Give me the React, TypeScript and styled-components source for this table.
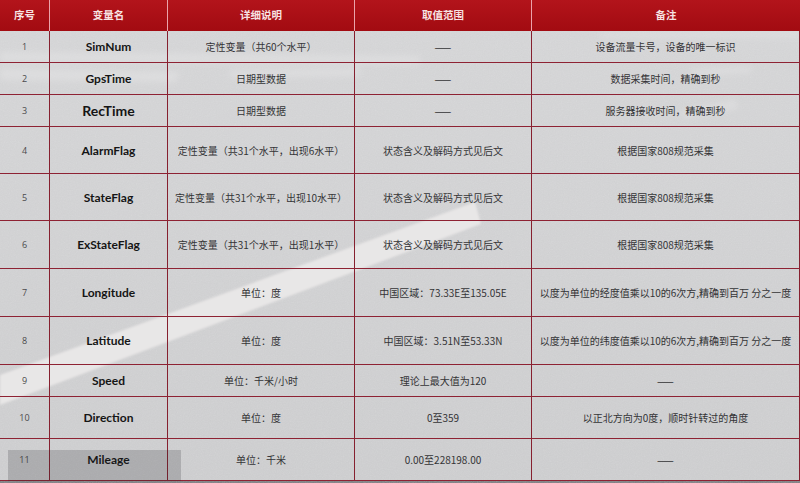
import React from 'react';
import styled, {createGlobalStyle} from "styled-components";

type Entry = {
    no: string;
    name: string;
    desc: string;
    range: string;
    note: string;
    height: number;
    big?: boolean;
};

const heads = ['序号', '变量名', '详细说明', '取值范围', '备注'];

const entries: Entry[] = [
    {no: '1', name: 'SimNum', desc: '定性变量（共60个水平）', range: '——', note: '设备流量卡号，设备的唯一标识', height: 32},
    {no: '2', name: 'GpsTime', desc: '日期型数据', range: '——', note: '数据采集时间，精确到秒', height: 32},
    {no: '3', name: 'RecTime', desc: '日期型数据', range: '——', note: '服务器接收时间，精确到秒', height: 32, big: true},
    {no: '4', name: 'AlarmFlag', desc: '定性变量（共31个水平，出现6水平）', range: '状态含义及解码方式见后文', note: '根据国家808规范采集', height: 47},
    {no: '5', name: 'StateFlag', desc: '定性变量（共31个水平，出现10水平）', range: '状态含义及解码方式见后文', note: '根据国家808规范采集', height: 47},
    {no: '6', name: 'ExStateFlag', desc: '定性变量（共31个水平，出现1水平）', range: '状态含义及解码方式见后文', note: '根据国家808规范采集', height: 48},
    {no: '7', name: 'Longitude', desc: '单位：度', range: '中国区域：73.33E至135.05E', note: '以度为单位的经度值乘以10的6次方,精确到百万 分之一度', height: 48},
    {no: '8', name: 'Latitude', desc: '单位：度', range: '中国区域：3.51N至53.33N', note: '以度为单位的纬度值乘以10的6次方,精确到百万 分之一度', height: 48},
    {no: '9', name: 'Speed', desc: '单位：千米/小时', range: '理论上最大值为120', note: '——', height: 32},
    {no: '10', name: 'Direction', desc: '单位：度', range: '0至359', note: '以正北方向为0度，顺时针转过的角度', height: 42},
    {no: '11', name: 'Mileage', desc: '单位：千米', range: '0.00至228198.00', note: '——', height: 42},
];

const Road = () => (
    <Backdrop viewBox="0 0 800 483" preserveAspectRatio="none">
        <defs>
            <linearGradient id="asphalt" x1="0" y1="0" x2="0" y2="1">
                <stop offset="0" stopColor="#95969a"/>
                <stop offset="1" stopColor="#7f8084"/>
            </linearGradient>
            <filter id="grain">
                <feTurbulence type="fractalNoise" baseFrequency="0.85" numOctaves="2" stitchTiles="stitch"/>
                <feColorMatrix type="saturate" values="0"/>
            </filter>
            <filter id="soft">
                <feGaussianBlur stdDeviation="3"/>
            </filter>
            <filter id="edge">
                <feGaussianBlur stdDeviation="0.8"/>
            </filter>
        </defs>
        <rect width="800" height="483" fill="url(#asphalt)"/>
        <rect width="800" height="483" filter="url(#grain)" opacity="0.22"/>
        <g filter="url(#soft)" fill="#bdbdc0" opacity="0.5">
            <polygon points="0,52 420,56 420,64 0,62"/>
            <polygon points="0,68 180,72 175,82 0,80"/>
            <polygon points="230,70 360,68 360,76 230,78"/>
            <polygon points="600,33 800,31 800,38 600,38"/>
            <polygon points="690,70 750,66 752,72 692,76"/>
            <polygon points="680,112 735,100 738,108 684,118"/>
        </g>
        <polygon points="0,375 475,202 481,224 0,405" fill="#c6c2c2" filter="url(#edge)"/>
    </Backdrop>
);

export default function App() {
    return (
        <>
            <GlobalStyle/>
            <Stage>
                <Road/>
                <Sheet>
                    <HeadRow>
                        {heads.map(h => <HeadCell key={h}>{h}</HeadCell>)}
                    </HeadRow>
                    {entries.map(e => (
                        <Row key={e.no} $height={e.height}>
                            <NoCell>{e.no}</NoCell>
                            <NameCell $big={e.big}>{e.name}</NameCell>
                            <Cell>{e.desc}</Cell>
                            <Cell>{e.range}</Cell>
                            <Cell>{e.note}</Cell>
                        </Row>
                    ))}
                </Sheet>
                <Shade/>
            </Stage>
        </>
    );
}

const GlobalStyle = createGlobalStyle`
  html, body {
    margin: 0;
    padding: 0;
    background: #8a8b8f;
  }
`

const columns = '50px 118px 187px 177px 268px';

const Stage = styled.div`
  position: relative;
  display: grid;
  width: 800px;
  height: 483px;
  overflow: hidden;

  & > * {
    grid-area: 1 / 1;
  }
`

const Backdrop = styled.svg`
  width: 800px;
  height: 483px;
  display: block;
`

const Sheet = styled.div`
  display: flex;
  flex-direction: column;
  align-self: start;
`

const HeadRow = styled.div`
  display: grid;
  grid-template-columns: ${columns};
  height: 31px;
  background: linear-gradient(#b3141b, #a20b11);
`

const HeadCell = styled.div`
  display: flex;
  align-items: center;
  justify-content: center;
  border-right: 1px solid #eba3aa;
  font-family: "Noto Sans CJK SC", serif;
  font-weight: 700;
  font-size: 10.5px;
  color: #f7e3e3;
  padding-bottom: 2px;

  &:last-child {
    border-right: none;
  }
`

const Row = styled.div<{ $height: number }>`
  display: grid;
  grid-template-columns: ${columns};
  height: ${p => p.$height}px;
  box-sizing: border-box;
  border-bottom: 1px solid #8e2233;
  background: rgba(255, 255, 255, 0.6);
`

const Cell = styled.div`
  display: flex;
  align-items: center;
  justify-content: center;
  text-align: center;
  border-right: 1px solid #86202f;
  font-family: "Noto Sans CJK SC", sans-serif;
  font-size: 10px;
  color: #343436;
  white-space: nowrap;
`

const NoCell = styled(Cell)`
  font-family: "Open Sans", sans-serif;
  font-size: 9px;
  color: #4a4a4c;
`

const NameCell = styled(Cell)<{ $big?: boolean }>`
  font-family: Lato, "Open Sans", sans-serif;
  font-weight: 700;
  font-size: ${p => p.$big ? '14px' : '12px'};
  color: #151515;
`

const Shade = styled.div`
  position: absolute;
  left: 8px;
  top: 450px;
  width: 173px;
  height: 31px;
  background: rgba(40, 40, 44, 0.2);
  pointer-events: none;
`
